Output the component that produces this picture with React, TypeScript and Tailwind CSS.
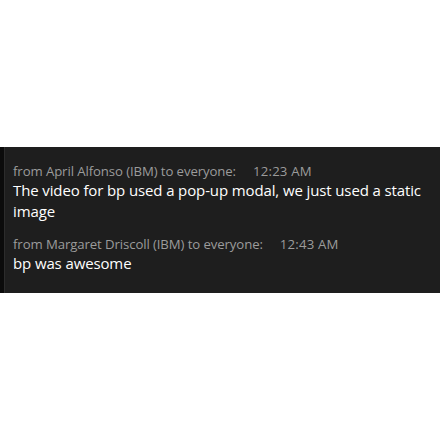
export default function App() {
  const messages = [
    {
      from: "April Alfonso (IBM)",
      time: "12:23 AM",
      text: "The video for bp used a pop-up modal, we just used a static image",
    },
    {
      from: "Margaret Driscoll (IBM)",
      time: "12:43 AM",
      text: "bp was awesome",
    },
  ];

  return (
    <div className="w-[440px] h-[440px] bg-white flex items-center">
      <div className="w-full h-[146px] mt-[-1px] flex bg-[#1e1e1e] border-l-4 border-[#0b0b0b]">
        <div className="w-px bg-[#2c2c2c]" />
        <div
          className="flex-1 pl-[8px] pr-3 pt-[15px] flex flex-col gap-[13px]"
          style={{ fontFamily: '"Open Sans", "Noto Sans", sans-serif' }}
        >
          {messages.map((m) => (
            <div key={m.time} className="flex flex-col">
              <div className="text-[13.2px] leading-[18px] text-[#9b9b9b] tracking-[-0.1px]">
                from {m.from} to everyone:<span className="ml-[17px] tracking-[0.2px]">{m.time}</span>
              </div>
              <div className="text-[15px] leading-[21px] text-white tracking-[-0.12px]">{m.text}</div>
            </div>
          ))}
        </div>
      </div>
    </div>
  );
}
